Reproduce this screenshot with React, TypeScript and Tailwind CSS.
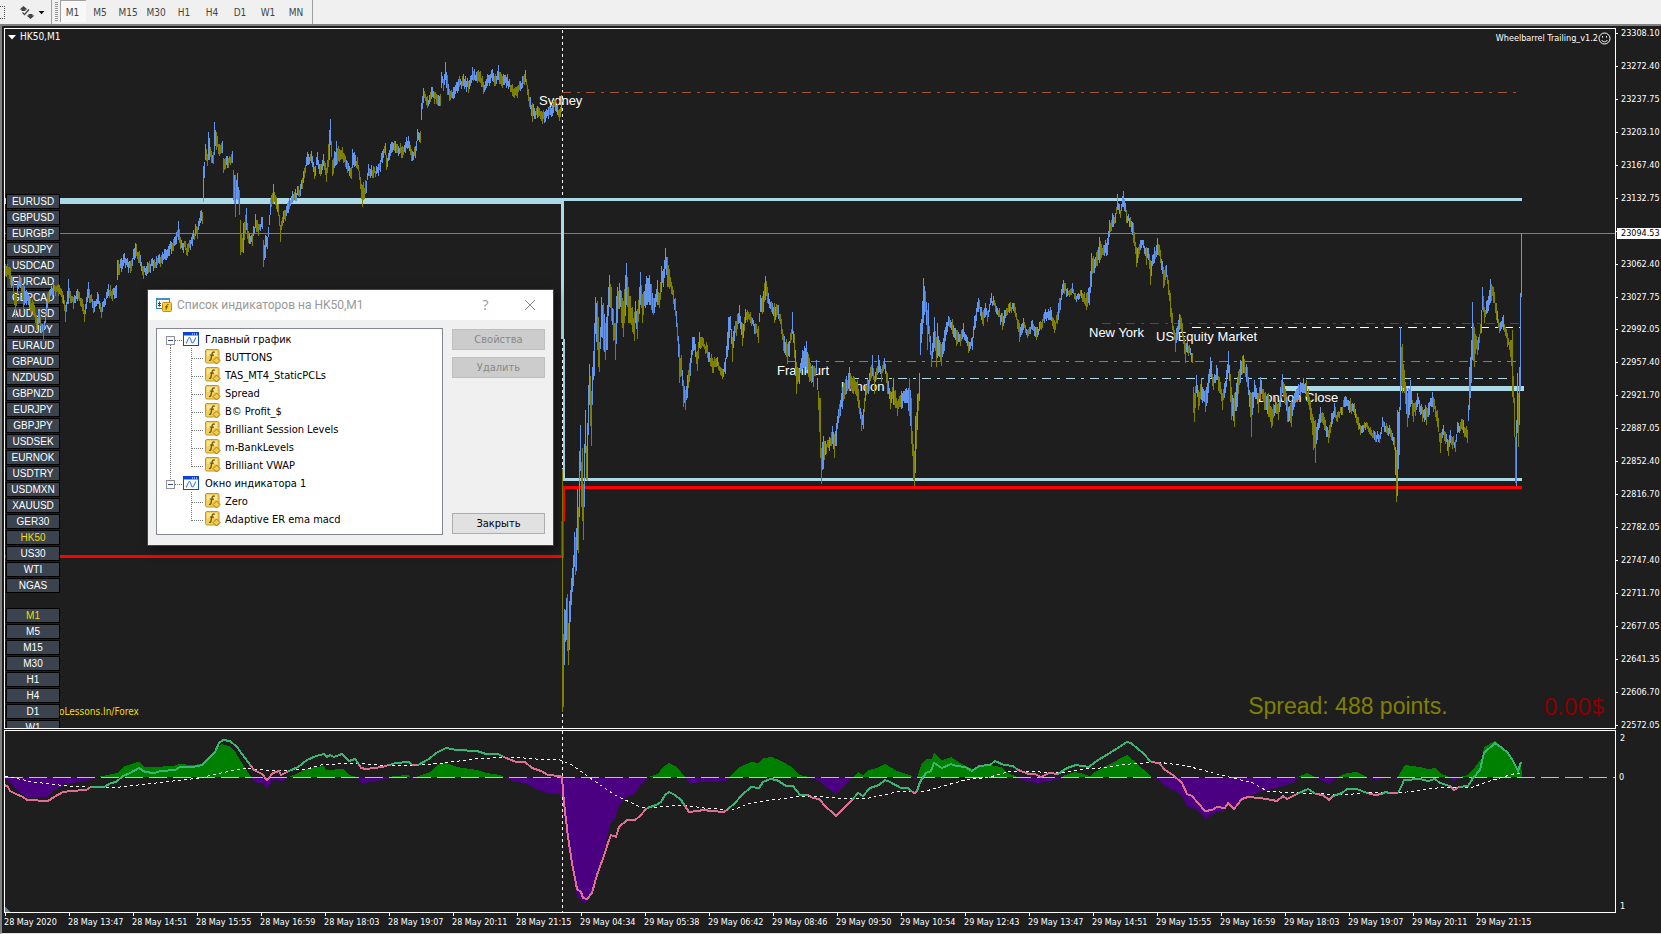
import React from "react";

type Bar = { x: number; hi: number; lo: number; up: boolean };
type Point = [number, number];

/* Price outline: [x, mid] where the range is narrow, [x, high, low] elsewhere. */
const PRICE: number[][] = [
  [5, 270], [9, 273], [10, 268, 285], [13, 287], [15, 295, 318], [17, 288], [19, 281], [21, 278, 292], [23, 285, 312], [26, 290, 305], [30, 298, 312],
  [33, 308], [36, 315, 330], [39, 317], [43, 325, 340], [46, 307], [49, 290, 302], [53, 288], [58, 290], [62, 297],
  [65, 305, 322], [68, 279, 304], [70, 297], [73, 303], [77, 295], [82, 305], [84, 310, 322], [88, 282, 298], [93, 307], [97, 298],
  [101, 307, 318], [108, 290], [112, 295], [116, 285, 298], [117, 260, 280], [123, 260], [130, 267], [135, 243, 258],
  [139, 257], [143, 266, 279], [147, 268], [156, 262], [162, 258], [169, 250], [176, 238], [178, 221, 240], [180, 243],
  [187, 250], [192, 240], [195, 230], [197, 233], [200, 217], [202, 218], [203, 166, 202], [205, 144, 160], [207, 160],
  [208, 132, 160], [211, 157], [213, 158], [214, 122, 155], [216, 132, 150], [219, 150], [222, 147], [223, 158, 173],
  [227, 162], [232, 157], [233, 170, 200], [235, 175, 217], [237, 173, 200], [239, 190, 215], [240, 220, 255], [242, 238, 252], [243, 223, 253],
  [246, 208, 230], [248, 237], [252, 240], [255, 214, 228], [258, 230], [262, 223], [263, 240, 267], [265, 235, 258],
  [267, 243], [270, 199, 215], [273, 184, 204], [276, 203], [278, 210], [280, 225, 242], [283, 217], [288, 207],
  [292, 197], [295, 195], [300, 190], [303, 177], [307, 152, 165], [311, 157], [314, 173], [317, 152, 165], [320, 170],
  [323, 160], [326, 168, 182], [329, 130, 160], [330, 119, 145], [332, 160, 176], [336, 141, 165], [342, 153], [347, 167], [351, 173],
  [352, 149, 168], [357, 163], [360, 183], [362, 185, 207], [366, 187], [368, 170], [373, 172], [378, 170], [382, 157],
  [385, 149], [386, 155, 170], [390, 150], [395, 147], [402, 152], [408, 142], [411, 155], [415, 152], [417, 135],
  [420, 137], [421, 103, 120], [423, 88, 103], [427, 102], [431, 93], [434, 98], [440, 100], [441, 72, 88], [443, 85],
  [445, 62, 80], [447, 75, 95], [449, 95], [453, 93], [458, 85], [463, 80], [468, 87], [472, 67, 80], [477, 77], [480, 77], [483, 88],
  [487, 80], [492, 75], [495, 80], [498, 65, 80], [502, 82], [507, 80], [512, 90], [517, 92], [522, 82], [525, 76],
  [528, 95], [532, 103, 122], [537, 112], [542, 118], [548, 113], [555, 105], [559, 115], [561, 95, 112],
  [562, 469, 712], [563, 634, 707], [564, 609, 665], [566, 598, 640], [567, 594, 651], [568, 623, 665], [569, 601, 650], [571, 578, 605],
  [573, 555, 586], [574, 532, 567], [575, 537, 575], [576, 528, 571], [577, 489, 550], [578, 507, 553], [579, 451, 517], [580, 425, 471],
  [581, 462, 507], [582, 448, 521], [583, 484, 540], [584, 444, 507], [585, 410, 453], [586, 446, 480], [587, 423, 481], [588, 385, 435],
  [589, 364, 405], [590, 376, 426], [591, 391, 446], [592, 367, 405], [593, 351, 380], [594, 323, 376], [595, 297, 334], [597, 301, 350],
  [598, 317, 367], [599, 342, 372], [601, 297, 337], [603, 303, 350], [605, 323, 360], [607, 305, 350], [608, 287, 316], [609, 275, 307],
  [611, 287, 321], [613, 309, 341], [615, 323, 360], [616, 296, 344], [617, 287, 323], [619, 283, 309], [621, 291, 323], [623, 301, 337],
  [625, 275, 316], [626, 263, 305], [628, 287, 323], [630, 296, 323], [632, 307, 332], [634, 312, 341], [635, 301, 323], [637, 309, 339],
  [639, 287, 314], [640, 272, 305], [642, 294, 323], [646, 276, 305], [649, 275, 305], [651, 284, 310], [653, 298, 315], [657, 280, 305],
  [659, 293, 308], [661, 266, 292], [663, 269, 287], [665, 248, 269], [667, 257, 287], [669, 269, 289], [671, 282, 294], [675, 298, 316],
  [677, 323, 341], [679, 344, 383], [681, 355, 376], [683, 380, 407], [685, 390, 410], [687, 375, 398], [690, 358, 376], [692, 337, 355],
  [694, 337, 350], [697, 351, 371], [699, 332, 348], [702, 337, 346], [707, 345, 358], [712, 358, 373], [717, 357, 366], [722, 369, 379],
  [725, 358, 374], [728, 317, 350], [730, 316, 330], [732, 337, 362], [734, 326, 341], [739, 305, 323], [742, 323, 346], [745, 309, 323],
  [750, 312, 323], [755, 323, 334], [758, 326, 343], [760, 295, 312], [763, 291, 312], [765, 276, 300], [767, 287, 303], [771, 301, 312],
  [774, 303, 323], [778, 305, 319], [781, 319, 334], [783, 334, 351], [787, 344, 364], [789, 341, 357], [792, 312, 334], [794, 334, 358],
  [796, 362, 394], [799, 369, 384], [802, 350, 369], [806, 341, 373], [809, 358, 382], [813, 366, 387], [816, 360, 373], [818, 391, 410],
  [820, 398, 458], [821, 448, 484], [823, 436, 469], [825, 441, 455], [829, 437, 451], [832, 426, 444], [834, 434, 458], [836, 423, 446],
  [838, 409, 423], [842, 387, 409], [846, 376, 394], [849, 367, 391], [853, 376, 394], [857, 380, 401], [861, 412, 431], [863, 409, 429],
  [865, 384, 401], [868, 380, 394], [872, 355, 376], [874, 376, 394], [878, 355, 373], [881, 369, 382], [884, 358, 369], [887, 373, 394],
  [890, 391, 409], [893, 378, 405], [897, 401, 416], [901, 391, 409], [905, 389, 403], [909, 378, 416], [911, 398, 444], [913, 444, 480],
  [914, 451, 486], [915, 416, 473], [917, 394, 430], [919, 373, 401], [920, 323, 355], [922, 301, 334], [923, 278, 323], [925, 291, 312],
  [927, 310, 350], [928, 303, 334], [931, 351, 367], [934, 317, 348], [936, 337, 367], [937, 323, 358], [941, 344, 366], [944, 330, 351],
  [948, 316, 326], [952, 319, 334], [956, 330, 346], [960, 334, 346], [963, 323, 337], [968, 341, 353], [972, 337, 350], [974, 316, 330],
  [978, 298, 312], [983, 310, 326], [985, 303, 317], [987, 311, 322], [991, 293, 303], [995, 303, 312], [1002, 313, 330], [1009, 303, 313], [1014, 303, 313],
  [1019, 323, 342], [1023, 318, 330], [1027, 330, 338], [1032, 320, 330], [1036, 327, 340], [1044, 312, 323], [1050, 307, 320], [1054, 320, 333],
  [1058, 303, 320], [1063, 280, 293], [1069, 290, 297], [1072, 283, 293], [1075, 293, 300], [1081, 290, 298], [1086, 293, 310], [1089, 287, 305],
  [1091, 253, 287], [1095, 257, 268], [1099, 237, 263], [1103, 245, 255], [1107, 238, 255], [1109, 220, 237], [1112, 213, 227], [1115, 213, 223],
  [1117, 194, 210], [1120, 210, 218], [1123, 191, 207], [1126, 210, 223], [1130, 217, 227], [1133, 223, 243], [1136, 247, 267], [1140, 240, 250],
  [1143, 240, 248], [1146, 247, 265], [1148, 248, 260], [1150, 260, 285], [1154, 247, 263], [1157, 238, 255], [1160, 250, 263], [1163, 267, 288],
  [1166, 265, 277], [1168, 280, 295], [1170, 293, 317], [1172, 313, 330], [1175, 333, 352], [1179, 314, 330], [1182, 323, 337], [1185, 343, 363],
  [1187, 340, 353], [1192, 353, 363], [1193, 387, 413], [1194, 393, 422], [1196, 375, 393], [1198, 390, 410], [1201, 378, 400], [1205, 390, 412],
  [1207, 383, 403], [1210, 357, 377], [1213, 377, 390], [1216, 365, 380], [1219, 377, 393], [1222, 393, 410], [1226, 370, 387], [1228, 351, 373],
  [1231, 387, 420], [1234, 393, 427], [1237, 377, 407], [1240, 360, 383], [1243, 355, 373], [1247, 367, 387], [1251, 393, 437], [1254, 380, 397],
  [1258, 393, 413], [1260, 377, 393], [1264, 393, 410], [1268, 393, 417], [1271, 407, 428], [1275, 397, 413], [1278, 403, 420], [1280, 387, 407],
  [1282, 374, 393], [1287, 400, 422], [1291, 400, 427], [1294, 393, 407], [1298, 384, 400], [1303, 378, 393], [1306, 380, 397], [1310, 400, 420],
  [1313, 417, 450], [1315, 420, 463], [1317, 423, 440], [1320, 407, 423], [1324, 417, 430], [1328, 430, 443], [1331, 413, 427], [1334, 403, 417],
  [1337, 412, 422], [1341, 407, 415], [1345, 396, 407], [1350, 398, 412], [1354, 403, 415], [1358, 417, 430], [1360, 425, 435], [1365, 423, 430],
  [1370, 427, 435], [1375, 432, 442], [1379, 435, 443], [1382, 417, 427], [1386, 423, 433], [1391, 430, 440], [1394, 437, 450], [1396, 450, 502],
  [1397, 410, 496], [1399, 407, 455], [1400, 327, 410], [1402, 344, 393], [1404, 370, 393], [1407, 393, 427], [1410, 380, 407], [1413, 403, 422],
  [1417, 393, 407], [1422, 407, 422], [1426, 407, 425], [1432, 392, 407], [1437, 410, 427], [1440, 433, 453], [1443, 425, 435], [1448, 440, 456],
  [1450, 430, 443], [1455, 440, 452], [1457, 422, 433], [1463, 420, 433], [1467, 430, 443], [1469, 367, 410], [1471, 340, 383], [1472, 302, 360],
  [1474, 327, 367], [1478, 337, 350], [1481, 310, 333], [1482, 287, 310], [1484, 307, 323], [1487, 300, 313], [1490, 279, 303], [1493, 287, 303],
  [1496, 303, 320], [1499, 323, 333], [1503, 315, 330], [1507, 333, 347], [1510, 340, 357], [1512, 330, 397], [1514, 398, 437], [1515, 437, 483],
  [1516, 420, 486], [1517, 373, 433], [1518, 393, 447], [1519, 367, 425], [1520, 293, 390], [1521, 233, 297],
];

const hash = (n: number) => {
  const v = Math.sin(n * 12.9898) * 43758.5453;
  return v - Math.floor(v);
};

function buildBars(): Bar[] {
  const keys = PRICE.map((k) => (k.length === 2 ? [k[0], k[1] - 6, k[1] + 6] : k));
  const bars: Bar[] = [];
  for (let i = 0; i < keys.length; i++) {
    const [x, hi, lo] = keys[i];
    const next = keys[i + 1];
    const prev = keys[i - 1] ?? keys[i];
    const rising = hi + lo < prev[1] + prev[2];
    bars.push({ x, hi, lo, up: x === 562 ? false : rising });
    if (!next) break;
    const nextUp = next[1] + next[2] < hi + lo;
    for (let px = x + 1; px < next[0]; px++) {
      const t = (px - x) / (next[0] - x);
      const h = hi + (next[1] - hi) * t;
      const l = lo + (next[2] - lo) * t;
      const shift = (hash(px) - 0.5) * 6;
      const half = ((l - h) / 2) * (0.5 + hash(px + 7) * 0.45);
      const mid = (h + l) / 2 + shift;
      bars.push({
        x: px,
        hi: Math.round(mid - half),
        lo: Math.round(mid + half),
        up: hash(Math.floor(px / 2) + 31) < 0.6 ? nextUp : !nextUp,
      });
    }
  }
  return bars;
}

const BARS = buildBars();
const barPath = (up: boolean) =>
  BARS.filter((b) => b.up === up)
    .map((b) => `M${b.x} ${b.hi}h1V${b.lo}h-1z`)
    .join("");

/* Adaptive MACD line, cut wherever its colour changes. */
const MACD: { up: boolean; pts: Point[] }[] = [
  { up: false, pts: [[5, 785], [8, 787], [10, 791], [16, 794], [23, 797], [27, 800], [48, 801], [54, 797], [63, 792], [71, 791], [86, 790], [91, 787]] },
  { up: true, pts: [[91, 787], [104, 787], [111, 783], [116, 782], [123, 776], [130, 773], [139, 768], [145, 772], [154, 773], [161, 771], [175, 770], [180, 767], [193, 767], [202, 765], [211, 756], [215, 752], [219, 743], [223, 740], [230, 741], [237, 747], [245, 758], [251, 766]] },
  { up: false, pts: [[251, 766], [254, 770], [262, 774], [267, 780], [273, 773], [279, 771], [281, 775], [287, 772]] },
  { up: true, pts: [[287, 772], [298, 767], [307, 760], [316, 756], [324, 754], [327, 757], [330, 755], [334, 757], [342, 754], [349, 761], [355, 759], [358, 763]] },
  { up: false, pts: [[358, 763], [361, 768], [366, 769], [382, 767], [389, 765]] },
  { up: true, pts: [[389, 765], [396, 763], [409, 762], [412, 765]] },
  { up: false, pts: [[412, 765], [418, 765]] },
  { up: true, pts: [[418, 765], [429, 759], [436, 753], [446, 748], [457, 750], [477, 751], [486, 754], [498, 754], [504, 757]] },
  { up: false, pts: [[504, 757], [516, 762], [525, 762], [532, 768], [541, 771], [548, 775], [559, 776], [562, 777], [564, 803], [568, 837], [572, 863], [577, 889], [581, 892], [583, 898], [587, 899], [592, 893], [597, 875], [605, 853], [608, 843], [611, 835], [616, 837], [619, 827], [627, 820], [635, 820], [640, 816], [647, 808]] },
  { up: true, pts: [[647, 808], [656, 805], [661, 802], [665, 795], [669, 792], [675, 795], [681, 800], [685, 806]] },
  { up: false, pts: [[685, 806], [689, 812], [697, 811], [704, 810], [711, 811], [724, 812], [728, 809]] },
  { up: true, pts: [[728, 809], [735, 803], [742, 795], [751, 787], [759, 788], [763, 782], [770, 779], [777, 780], [786, 786], [793, 786], [800, 795], [808, 795]] },
  { up: false, pts: [[808, 795], [813, 798], [819, 799], [826, 807], [833, 813], [836, 816], [842, 810], [852, 800]] },
  { up: true, pts: [[852, 800], [858, 793], [863, 796], [870, 788], [879, 785], [885, 780], [890, 782], [901, 788], [908, 788], [912, 792]] },
  { up: false, pts: [[912, 792], [915, 793], [917, 791]] },
  { up: true, pts: [[917, 791], [920, 782], [926, 773], [931, 771], [934, 763], [942, 768], [951, 764], [956, 766], [965, 767], [972, 771], [979, 766], [990, 765], [995, 761], [1004, 765], [1013, 766], [1018, 770]] },
  { up: false, pts: [[1018, 770], [1029, 774], [1035, 774], [1041, 777], [1049, 773], [1058, 774]] },
  { up: true, pts: [[1058, 774], [1067, 768], [1076, 765], [1089, 767], [1095, 762], [1113, 751], [1127, 742], [1131, 743], [1138, 749], [1143, 753], [1151, 762]] },
  { up: false, pts: [[1151, 762], [1159, 763], [1165, 770], [1173, 775], [1182, 783], [1187, 794], [1192, 796], [1205, 811], [1212, 810], [1217, 807], [1225, 808], [1228, 803], [1234, 809], [1242, 799], [1248, 797], [1260, 798], [1272, 800], [1277, 801], [1283, 796], [1287, 799], [1297, 794]] },
  { up: true, pts: [[1297, 794], [1308, 789], [1316, 794]] },
  { up: false, pts: [[1316, 794], [1323, 795], [1329, 800], [1333, 796]] },
  { up: true, pts: [[1333, 796], [1342, 793], [1347, 789], [1357, 789], [1367, 793]] },
  { up: false, pts: [[1367, 793], [1375, 795], [1382, 794]] },
  { up: true, pts: [[1382, 794], [1385, 792], [1390, 793]] },
  { up: false, pts: [[1390, 793], [1398, 793]] },
  { up: true, pts: [[1398, 793], [1402, 785], [1404, 780], [1420, 779], [1428, 781], [1435, 779], [1440, 783], [1450, 786]] },
  { up: false, pts: [[1450, 786], [1454, 790], [1459, 787]] },
  { up: true, pts: [[1459, 787], [1468, 786], [1473, 778], [1480, 770], [1484, 753], [1495, 743], [1502, 748], [1508, 753], [1513, 761], [1518, 771], [1521, 762]] },
];

const HISTOGRAM: Point[] = [
  [5, 777], [15, 788], [27, 798], [47, 797], [55, 790], [65, 784], [87, 781], [97, 777], [107, 775], [117, 773], [123, 767], [137, 762], [140, 762],
  [144, 767], [153, 767], [173, 766], [180, 764], [192, 765], [202, 764], [214, 755], [221, 744], [229, 746], [236, 753], [243, 765], [251, 777], [255, 783],
  [262, 783], [267, 789], [273, 780], [282, 781], [289, 777], [298, 773], [309, 768], [324, 766], [326, 770], [343, 769], [349, 775], [357, 777],
  [362, 783], [373, 782], [389, 778], [393, 776], [409, 775], [412, 779], [418, 776], [430, 772], [437, 765], [446, 763], [457, 767], [477, 770],
  [487, 773], [500, 775], [504, 777], [514, 782], [525, 783], [536, 789], [550, 794], [560, 794], [562, 800], [568, 847], [577, 897], [583, 903],
  [586, 903], [594, 887], [604, 850], [610, 825], [615, 819], [619, 806], [627, 797], [635, 794], [642, 783], [648, 777], [658, 774], [663, 767],
  [669, 763], [677, 767], [685, 777], [690, 784], [701, 782], [711, 782], [726, 781], [729, 777], [740, 767], [751, 762], [759, 763], [763, 758],
  [772, 757], [781, 761], [792, 767], [799, 775], [810, 777], [819, 781], [827, 788], [836, 794], [844, 786], [851, 779], [858, 772], [863, 775],
  [869, 770], [877, 768], [885, 764], [897, 771], [910, 775], [912, 777], [915, 781], [918, 775], [922, 763], [927, 759], [932, 759], [934, 753],
  [942, 760], [951, 757], [960, 763], [972, 769], [990, 765], [1001, 767], [1008, 773], [1017, 777], [1027, 782], [1040, 783], [1045, 781],
  [1059, 780], [1063, 776], [1074, 772], [1080, 773], [1090, 776], [1095, 772], [1110, 764], [1127, 755], [1133, 760], [1143, 769], [1151, 777],
  [1160, 780], [1163, 785], [1175, 791], [1182, 796], [1187, 806], [1195, 809], [1206, 819], [1217, 812], [1223, 812], [1228, 804], [1234, 809],
  [1242, 799], [1260, 792], [1280, 787], [1292, 783], [1298, 777], [1307, 773], [1315, 777], [1329, 784], [1335, 778], [1347, 773], [1357, 772],
  [1367, 777], [1377, 780], [1387, 777], [1397, 779], [1400, 773], [1405, 765], [1420, 767], [1428, 769], [1435, 768], [1440, 773], [1449, 777],
  [1454, 781], [1460, 777], [1468, 775], [1475, 767], [1482, 758], [1484, 747], [1495, 741], [1508, 753], [1513, 762], [1518, 773], [1521, 762], [1522, 777],
];

const SIGNAL: Point[] = [
  [5, 776], [33, 782], [67, 786], [87, 787], [120, 787], [147, 784], [173, 781], [200, 778], [221, 773], [246, 768], [264, 770], [286, 771],
  [307, 769], [321, 765], [354, 763], [379, 765], [421, 765], [443, 763], [475, 759], [511, 757], [536, 759], [560, 760], [572, 765], [590, 778],
  [615, 795], [640, 807], [658, 807], [683, 805], [704, 808], [733, 810], [747, 804], [772, 800], [804, 796], [826, 797], [847, 799], [869, 798],
  [897, 792], [926, 791], [947, 785], [965, 780], [990, 777], [1011, 771], [1040, 772], [1065, 772], [1083, 769], [1100, 768], [1130, 764],
  [1157, 762], [1187, 766], [1213, 773], [1237, 779], [1253, 783], [1267, 791], [1280, 792], [1303, 793], [1327, 794], [1343, 795], [1363, 793],
  [1407, 792], [1427, 789], [1447, 787], [1473, 787], [1487, 782], [1503, 777], [1517, 773], [1521, 773],
];

const toPoints = (pts: Point[]) => pts.map((p) => p.join(",")).join(" ");
const histogramPoints = `5,777 ${toPoints(HISTOGRAM)}`;

const SYMBOLS = [
  "EURUSD", "GBPUSD", "EURGBP", "USDJPY", "USDCAD", "EURCAD", "GBPCAD", "AUDUSD", "AUDJPY", "EURAUD", "GBPAUD", "NZDUSD", "GBPNZD",
  "EURJPY", "GBPJPY", "USDSEK", "EURNOK", "USDTRY", "USDMXN", "XAUUSD", "GER30", "HK50", "US30", "WTI", "NGAS",
];
const CHART_FRAMES = ["M1", "M5", "M15", "M30", "H1", "H4", "D1", "W1"];
const TOOLBAR_FRAMES = ["M1", "M5", "M15", "M30", "H1", "H4", "D1", "W1", "MN"];

/* The empty entry is the tick that the current-price tag covers. */
const PRICES = [
  "23308.10", "23272.40", "23237.75", "23203.10", "23167.40", "23132.75", "", "23062.40", "23027.75", "22992.05", "22957.40",
  "22921.70", "22887.05", "22852.40", "22816.70", "22782.05", "22747.40", "22711.70", "22677.05", "22641.35", "22606.70", "22572.05",
];

const DATES = [
  "28 May 2020", "28 May 13:47", "28 May 14:51", "28 May 15:55", "28 May 16:59", "28 May 18:03", "28 May 19:07", "28 May 20:11",
  "28 May 21:15", "29 May 04:34", "29 May 05:38", "29 May 06:42", "29 May 08:46", "29 May 09:50", "29 May 10:54", "29 May 12:43",
  "29 May 13:47", "29 May 14:51", "29 May 15:55", "29 May 16:59", "29 May 18:03", "29 May 19:07", "29 May 20:11", "29 May 21:15",
];

const SESSIONS = [
  { name: "Sydney", x: 539, y: 100 },
  { name: "Frankfurt", x: 777, y: 370 },
  { name: "London", x: 841, y: 386 },
  { name: "New York", x: 1089, y: 332 },
  { name: "US Equity Market", x: 1156, y: 336 },
  { name: "London Close", x: 1258, y: 397 },
];

const TREE = [
  { name: "Главный график", items: ["BUTTONS", "TAS_MT4_StaticPCLs", "Spread", "B© Profit_$", "Brilliant Session Levels", "m-BankLevels", "Brilliant VWAP"] },
  { name: "Окно индикатора 1", items: ["Zero", "Adaptive ER ema macd"] },
];

function Toolbar() {
  return (
    <header className="flex h-6 shrink-0 items-stretch bg-[#f0f0f0] text-[10px] text-[#444]">
      <button type="button" aria-label="Шаблоны" className="w-[18px]">
        <svg viewBox="0 0 18 24" className="h-6 w-[18px]" shapeRendering="crispEdges">
          <path d="M0 6.5H4.5V18H0" fill="none" stroke="#555" strokeDasharray="1 1" />
        </svg>
      </button>
      <button type="button" aria-label="Стрелки" className="w-[33px]">
        <svg viewBox="0 0 33 24" className="h-6 w-[33px]">
          <path d="M5.500 6L9.500 9.500H7.500V11h-4V9.500H1.500zM12.500 19L8.500 15.500h2V14h4v1.500h2z" fill="#444" />
          <path d="M4.500 12.500L7 15M7 14l4-4.500" fill="none" stroke="#444" strokeWidth="1.300" />
          <path d="M20.500 11h6l-3 3.200z" fill="#111" />
        </svg>
      </button>
      <div className="flex border-l border-[#a0a0a0] pl-0.5">
        <svg viewBox="0 0 4 24" className="h-6 w-1" shapeRendering="crispEdges">
          <path d="M1 2.500h3M1 4.500h3M1 6.500h3M1 8.500h3M1 10.500h3M1 12.500h3M1 14.500h3M1 16.500h3M1 18.500h3M1 20.500h3" stroke="#999" />
        </svg>
      </div>
      <nav aria-label="Период" className="flex border-r border-[#a0a0a0] pr-0.5">
        {TOOLBAR_FRAMES.map((f, i) => (
          <button
            key={f}
            type="button"
            className={
              i === 0
                ? "mb-0.5 ml-0.5 w-[26px] border-l border-t border-[#a0a0a0] bg-[#f8f8f8] pr-0.5 pt-0.5"
                : "mb-0.5 w-7 border-t border-transparent pt-0.5"
            }
          >
            {f}
          </button>
        ))}
      </nav>
    </header>
  );
}

function LevelLines() {
  return (
    <svg viewBox="5 29 1610 699" preserveAspectRatio="none" className="pointer-events-none absolute inset-0 h-full w-full" shapeRendering="crispEdges">
      <path d="M562.500 30V728" stroke="#fff" strokeDasharray="3 3" />
      <path d="M5 233.500H1615" stroke="#708090" />
      <g fill="#add8e6">
        <path d="M5 198H562V204H5zM561 198H1522V201H564V339H561zM563 339H565V478H1522V481H563zM1284 386H1524V391H1284z" />
      </g>
      <path d="M5 555H561V521H564V558H5zM562 486H1522V489H565V521H562z" fill="red" />
      <g strokeDasharray="9 6 3 6">
        <path d="M562 92.500H1516" stroke="#a0522d" />
        <path d="M787 361.500H1516" stroke="#808080" />
        <path d="M850 378.500H1514" stroke="#add8e6" />
        <path d="M1102 323.500H1521" stroke="#008000" />
        <path d="M1192 327.500H1521" stroke="#fff" />
      </g>
    </svg>
  );
}

function ChartButton({ label, active }: { label: string; active: boolean }) {
  return (
    <button
      type="button"
      className={`flex h-[15px] w-[54px] shrink-0 items-center justify-center border border-black bg-[#3a434e] pt-px font-['Liberation_Sans',Arial,sans-serif] text-[10px] leading-none ${active ? "text-[#f0dc10]" : "text-white"}`}
    >
      {label}
    </button>
  );
}

function FormulaIcon() {
  return (
    <svg viewBox="0 0 16 16" className="h-4 w-4 shrink-0">
      <rect x="0.500" y="0.500" width="13.500" height="13.500" rx="1.500" fill="#f0cf5c" stroke="#c8961e" />
      <path d="M2 2h10v5H2z" fill="#f8e490" />
      <path d="M9.800 3.300c-1.600-.8-2.500.2-2.700 1.700L6 10c-.3 1.400-1 1.700-2 1.300M4.800 6.200h4.200" fill="none" stroke="#6e5614" strokeWidth="1.300" />
      <path d="M11.500 8l3.500 3.500-3.500 3.500L8 11.500z" fill="#f2cb4c" stroke="#a87a14" />
    </svg>
  );
}

function ChartWindowIcon() {
  return (
    <svg viewBox="0 0 16 14" className="h-3.5 w-4 shrink-0">
      <rect x="0.500" y="0.500" width="15" height="13" fill="#fff" stroke="#0a46d2" />
      <path d="M0 0h16v3.500H0z" fill="#0a46d2" />
      <path d="M9 1.500h1v1H9zM11 1.500h1v1h-1zM13 1.500h1v1h-1z" fill="#fff" />
      <path d="M3 11.500c1-.5 2-6 3.500-6s1.500 5.500 3 5.500 2-3.500 3.500-5.500" fill="none" stroke="#4f86e8" strokeWidth="1.200" />
    </svg>
  );
}

function IndicatorTree() {
  return (
    <ul className="flex-1 border border-[#828790] bg-white pb-1.5 pt-px text-[11px] text-black">
      {TREE.map((group, g) => (
        <li key={group.name}>
          <div className="flex h-[18px] items-center">
            <button type="button" aria-label={`Свернуть ${group.name}`} className="ml-2 h-[18px] w-[18px]">
              <svg viewBox="0 0 18 18" className="h-[18px] w-[18px]" shapeRendering="crispEdges">
                <path d={g === 0 ? "M5.500 15V18M10 10.500H17" : "M5.500 0V6M10 10.500H17"} stroke="#777" strokeDasharray="1 1" />
                <rect x="1.500" y="6.500" width="8" height="8" fill="#fff" stroke="#919191" />
                <path d="M3 10.500h5" stroke="#2b4ba0" />
              </svg>
            </button>
            <ChartWindowIcon />
            <span className="pl-1.5 leading-none">{group.name}</span>
          </div>
          <ul>
            {group.items.map((item, i) => (
              <li key={item} className="flex h-[18px] items-center">
                <svg viewBox="0 0 40 18" className="ml-2 h-[18px] w-10 shrink-0" shapeRendering="crispEdges">
                  {g === 0 && <path d="M5.500 0V18" stroke="#777" strokeDasharray="1 1" />}
                  <path d={i === group.items.length - 1 ? "M26.500 0V11M27 10.500H38" : "M26.500 0V18M27 10.500H38"} fill="none" stroke="#777" strokeDasharray="1 1" />
                </svg>
                <FormulaIcon />
                <span className="pl-1 leading-none">{item}</span>
              </li>
            ))}
          </ul>
        </li>
      ))}
    </ul>
  );
}

function IndicatorDialog() {
  return (
    <section
      role="dialog"
      aria-labelledby="indicator-title"
      className="absolute left-[142px] top-[260px] w-[407px] border border-[#444] bg-[#f0f0f0] shadow-[3px_4px_10px_rgba(0,0,0,0.5)]"
    >
      <div className="flex h-[30px] items-center bg-white pl-2 text-[#999]">
        <svg viewBox="0 0 16 16" className="h-4 w-4 shrink-0">
          <rect x="0.500" y="1.500" width="13" height="10" fill="#fff" stroke="#2f7fb8" />
          <path d="M0 1h14v2H0z" fill="#3c8fd0" />
          <path d="M3.500 4.500v5M2 6.500h3M2 8.500h3" stroke="#2c4a70" />
          <rect x="6.500" y="5.500" width="9" height="9" rx="1" fill="#f7cf3c" stroke="#c88c10" />
          <path d="M12.500 7.500c-1.500-.5-1.700.5-2 2l-.5 3.300M9 9.800h3" fill="none" stroke="#5e4a10" />
        </svg>
        <h2 id="indicator-title" className="flex-1 pl-[5px] font-[Roboto,'Open_Sans',sans-serif] text-[12px]">
          Список индикаторов на HK50,M1
        </h2>
        <button type="button" className="w-[45px] pb-0.5 font-['Open_Sans',sans-serif] text-[14px]">?</button>
        <button type="button" aria-label="Закрыть окно" className="flex w-[45px] justify-center pr-0.5">
          <svg viewBox="0 0 10 10" className="h-2.5 w-2.5">
            <path d="M0 0L10 10M10 0L0 10" stroke="#888" />
          </svg>
        </button>
      </div>
      <div className="flex gap-[9px] px-2 pb-2.5 pt-2">
        <IndicatorTree />
        <div className="flex w-[93px] flex-col pb-px pt-px text-[11px] leading-none">
          <button type="button" disabled className="h-[21px] border border-[#bfbfbf] bg-[#ccc] text-[#888]">Свойства</button>
          <button type="button" disabled className="mt-[7px] h-[21px] border border-[#bfbfbf] bg-[#ccc] text-[#888]">Удалить</button>
          <button type="button" className="mt-auto h-[21px] border border-[#adadad] bg-[#e1e1e1] text-black">Закрыть</button>
        </div>
      </div>
    </section>
  );
}

function MainPane() {
  return (
    <div className="relative flex-[699_1_0px] overflow-hidden border border-white">
      <LevelLines />
      {SESSIONS.map((s) => (
        <span
          key={s.name}
          className="absolute -translate-y-1/2 whitespace-nowrap font-['Liberation_Sans',Arial,sans-serif] text-[13px] leading-none text-white"
          style={{ left: `${((s.x - 5) / 1610) * 100}%`, top: `${((s.y - 29) / 699) * 100}%` }}
        >
          {s.name}
        </span>
      ))}
      <div className="absolute left-[3px] top-px flex items-center gap-1 text-[10px] leading-[14px] text-white">
        <svg viewBox="0 0 8 5" className="h-[5px] w-2">
          <path d="M0 0h8L4 4.500z" fill="#fff" />
        </svg>
        HK50,M1
      </div>
      <div className="absolute right-1 top-0.5 flex items-center text-[9px] leading-[14px] text-white">
        Wheelbarrel Trailing_v1.2
        <svg viewBox="0 0 13 13" className="h-[13px] w-[13px]" fill="none" stroke="#fff">
          <circle cx="6.500" cy="6.500" r="5.500" />
          <path d="M3.500 8c1.500 2.300 4.500 2.300 6 0M4.500 4v1.600M8.500 4v1.600" />
        </svg>
      </div>
      <a href="#forex" className="absolute bottom-[9px] left-[54px] text-[10px] leading-[14px] text-[#f0dc00]">oLessons.In/Forex</a>
      <div className="absolute left-px top-[165px] flex flex-col gap-px">
        {SYMBOLS.map((s) => (
          <ChartButton key={s} label={s} active={s === "HK50"} />
        ))}
        <div className="flex flex-col gap-px pt-3.5">
          {CHART_FRAMES.map((f) => (
            <ChartButton key={f} label={f} active={f === "M1"} />
          ))}
        </div>
      </div>
      <svg viewBox="5 29 1610 699" preserveAspectRatio="none" className="pointer-events-none absolute inset-0 h-full w-full" shapeRendering="crispEdges">
        <path d={barPath(false)} fill="#808000" />
        <path d={barPath(true)} fill="#6495ed" />
      </svg>
      <div className="absolute bottom-1.5 right-2.5 flex items-center gap-24 leading-8">
        <span className="font-['Liberation_Sans',Arial,sans-serif] text-[23px] text-[#808000]">Spread: 488 points.</span>
        <span className="font-['Noto_Sans',sans-serif] text-[24px] text-[#8b0000]">0.00$</span>
      </div>
      <IndicatorDialog />
    </div>
  );
}

function IndicatorPane() {
  return (
    <div className="relative flex-[181_1_0px] overflow-hidden border border-white">
      <svg viewBox="5 731 1610 181" preserveAspectRatio="none" className="absolute inset-0 h-full w-full" shapeRendering="crispEdges">
        <defs>
          <clipPath id="above-zero"><path d="M0 731H1615V777H0z" /></clipPath>
          <clipPath id="below-zero"><path d="M0 777H1615V912H0z" /></clipPath>
        </defs>
        <polygon points={histogramPoints} fill="#008000" clipPath="url(#above-zero)" />
        <polygon points={histogramPoints} fill="#4b0082" clipPath="url(#below-zero)" />
        <path d="M5 777.500H1615" stroke="#c0c0c0" strokeDasharray="18 6" />
        <path d="M562.500 731V912" stroke="#fff" strokeDasharray="3 3" />
        <polyline points={toPoints(SIGNAL)} fill="none" stroke="#fff" strokeDasharray="3 3" />
        {MACD.map((m) => (
          <polyline key={m.pts[0][0]} points={toPoints(m.pts)} fill="none" stroke={m.up ? "#3cb371" : "#db7093"} strokeWidth="2" />
        ))}
        <path d="M5 907l5 5H5z" fill="#708090" />
      </svg>
    </div>
  );
}

function PriceAxis() {
  return (
    <div className="relative flex-[701_1_0px]">
      <div className="absolute inset-x-0 -bottom-[3px] -top-px flex flex-col justify-between">
        {PRICES.map((p, i) => (
          <div key={i} className="flex h-[13px] items-center gap-[3px] leading-none">
            <span className="h-px w-0.5 bg-white" />
            {p}
          </div>
        ))}
      </div>
      <div className="absolute left-px right-0 top-[200px] h-[11px] bg-white pl-1 leading-[11px] text-black">23094.53</div>
    </div>
  );
}

export default function App() {
  return (
    <div className="flex h-screen flex-col overflow-hidden bg-[#1e1e1e] font-['DejaVu_Sans_Condensed','DejaVu_Sans',sans-serif]">
      <Toolbar />
      <main className="flex min-h-0 flex-1 flex-col border-b border-l-2 border-t-2 border-b-[#e3e3e3] border-l-[#808080] border-t-[#808080] pl-0.5 pt-0.5 text-[9px] text-white">
        <div className="flex min-h-0 flex-1">
          <div className="flex min-w-0 flex-1 flex-col gap-px">
            <MainPane />
            <IndicatorPane />
          </div>
          <div className="flex w-[45px] flex-col gap-px">
            <PriceAxis />
            <div className="relative flex-[183_1_0px] leading-none">
              <span className="absolute left-1 top-1">2</span>
              <span className="absolute left-[3px] top-[43px]">0</span>
              <span className="absolute bottom-0.5 left-1">1</span>
            </div>
          </div>
        </div>
        <div className="mr-[45px] grid h-5 shrink-0 grid-cols-[repeat(24,minmax(0,64fr))_minmax(0,76fr)]">
          {DATES.map((d) => (
            <div key={d} className="flex flex-col whitespace-nowrap leading-3">
              <span className="ml-px h-[3px] w-px shrink-0 bg-white" />
              {d}
            </div>
          ))}
        </div>
      </main>
    </div>
  );
}
